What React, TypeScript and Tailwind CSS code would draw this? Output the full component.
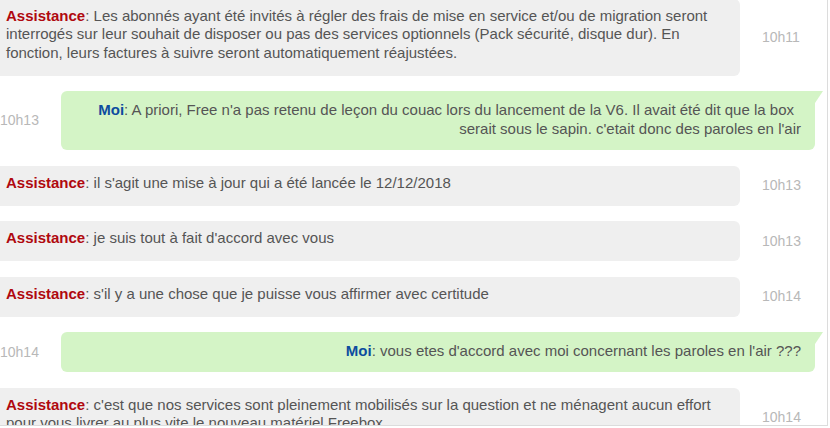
const font = { fontFamily: '"Liberation Sans", Arial, sans-serif' }

type Msg = {
    from: 'assist' | 'me'
    lines: string[]
    time: string
}

const messages: Msg[] = [
    {
        from: 'assist',
        time: '10h11',
        lines: [
            'Les abonnés ayant été invités à régler des frais de mise en service et/ou de migration seront',
            'interrogés sur leur souhait de disposer ou pas des services optionnels (Pack sécurité, disque dur). En',
            'fonction, leurs factures à suivre seront automatiquement réajustées.',
        ],
    },
    {
        from: 'me',
        time: '10h13',
        lines: [
            "A priori, Free n'a pas retenu de leçon du couac lors du lancement de la V6. Il avait été dit que la box",
            "serait sous le sapin. c'etait donc des paroles en l'air",
        ],
    },
    { from: 'assist', time: '10h13', lines: ["il s'agit une mise à jour qui a été lancée le 12/12/2018"] },
    { from: 'assist', time: '10h13', lines: ["je suis tout à fait d'accord avec vous"] },
    { from: 'assist', time: '10h14', lines: ["s'il y a une chose que je puisse vous affirmer avec certitude"] },
    { from: 'me', time: '10h14', lines: ["vous etes d'accord avec moi concernant les paroles en l'air ???"] },
    {
        from: 'assist',
        time: '10h14',
        lines: [
            "c'est que nos services sont pleinement mobilisés sur la question et ne ménagent aucun effort",
            'pour vous livrer au plus vite le nouveau matériel Freebox.',
        ],
    },
]

const Body = ({ m }: { m: Msg }) => (
    <>
        {m.lines.map((l, i) => (
            <div key={i} className="whitespace-nowrap">
                {i === 0 && (
                    m.from === 'assist'
                        ? <><span className="font-bold text-[#b0090f]">Assistance</span>: </>
                        : <><span className="font-bold text-[#0d4c9f]">Moi</span>: </>
                )}
                {l}
                {/* trailing space kept at the wrap, like the original renderer */}
                {m.from === 'me' && i < m.lines.length - 1 && <span className="inline-block w-[7px]" />}
            </div>
        ))}
    </>
)

export default function App() {
    return (
        <div className="w-[830px] h-[428px] bg-white overflow-hidden" style={font}>
            <div className="w-[828px] h-[426px] border-r border-b border-[#dcdcdc] overflow-hidden">
                <div className="flex flex-col gap-[15.5px] -mt-[1.5px] text-[15px] leading-[18.5px] text-[#555]">
                    {messages.map((m, i) =>
                        m.from === 'assist' ? (
                            <div key={i} className="flex items-center">
                                <div className="w-[740px] shrink-0 bg-[#efefef] rounded-r-[6px] pl-[6px] pt-[8px] pb-[13.5px]">
                                    <Body m={m} />
                                </div>
                                <div className="pl-[22px] text-[14px] text-[#b8b8b8]">{m.time}</div>
                            </div>
                        ) : (
                            <div key={i} className="flex items-center">
                                <div className="w-[61px] shrink-0 text-[14px] text-[#b8b8b8]">{m.time}</div>
                                <div className="relative w-[754px] shrink-0 bg-[#d4f4c6] rounded-[6px] rounded-tr-none pr-[14px] pt-[8.5px] pb-[12.5px] leading-[19px] text-right">
                                    <Body m={m} />
                                    <div className="absolute top-0 -right-[8px] w-0 h-0 border-t-[12px] border-t-[#d4f4c6] border-r-[8px] border-r-transparent" />
                                </div>
                            </div>
                        )
                    )}
                </div>
            </div>
        </div>
    )
}
